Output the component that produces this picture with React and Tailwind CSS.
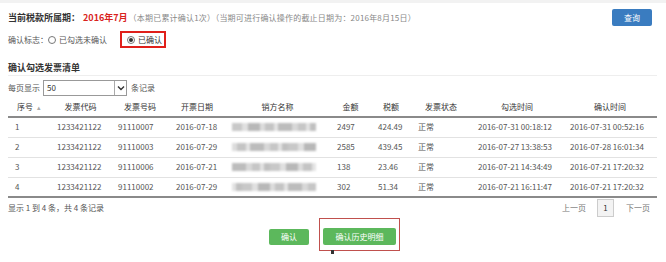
import React from 'react';

const rows = [
  { no: 1, code: '1233421122', num: '91110007', date: '2016-07-18', amount: '2497', tax: '424.49', status: '正常', pick: '2016-07-31 00:18:12', confirm: '2016-07-31 00:52:16' },
  { no: 2, code: '1233421122', num: '91110003', date: '2016-07-29', amount: '2585', tax: '439.45', status: '正常', pick: '2016-07-27 13:38:53', confirm: '2016-07-28 16:01:34' },
  { no: 3, code: '1233421122', num: '91110006', date: '2016-07-21', amount: '138', tax: '23.46', status: '正常', pick: '2016-07-21 14:34:49', confirm: '2016-07-21 17:20:32' },
  { no: 4, code: '1233421122', num: '91110002', date: '2016-07-29', amount: '302', tax: '51.34', status: '正常', pick: '2016-07-21 16:11:47', confirm: '2016-07-21 17:20:32' },
];

const headers = ['序号', '发票代码', '发票号码', '开票日期', '销方名称', '金额', '税额', '发票状态', '勾选时间', '确认时间'];
const widths = [42, 61, 58, 56, 105, 41, 40, 60, 92, 94];

// blurred seller name blocks
function Blurred({ seed }) {
  const segs = [
    [10, '#c8c8c8'], [6, '#e0e0e0'], [12, '#b8b8b8'], [5, '#dcdcdc'], [9, '#c4c4c4'],
    [4, '#e4e4e4'], [14, '#bcbcbc'], [6, '#d8d8d8'], [8, '#c6c6c6'], [4, '#e2e2e2'], [6, '#c0c0c0'],
  ];
  const shifted = segs.slice(seed).concat(segs.slice(0, seed));
  return (
    <div className="flex h-[8px] w-[84px] blur-[1px]">
      {shifted.map(([w, c], i) => (
        <span key={i} className="h-full" style={{ width: w, background: c }} />
      ))}
    </div>
  );
}

function Radio({ checked }) {
  return (
    <span className="inline-flex shrink-0 w-[8px] h-[8px] rounded-full border border-[#777] items-center justify-center bg-white">
      {checked && <span className="w-[4px] h-[4px] rounded-full bg-[#333]" />}
    </span>
  );
}

export default function App() {
  return (
    <div className="w-[666px] h-[262px] bg-white overflow-hidden pl-2 pr-[9px] border-t-[3px] border-[#f2f2f2] text-[#555]" style={{ fontFamily: '"Noto Sans CJK SC", "Noto Sans", sans-serif' }}>
      {/* period row */}
      <div className="mt-[6px] h-[17px] flex items-center justify-between">
        <div className="flex items-center whitespace-nowrap">
          <span className="text-[9px] font-bold text-[#333]">当前税款所属期：</span>
          <span className="text-[9px] font-bold text-[#d9231d] ml-[3px]">2016年7月</span>
          <span className="text-[8px] text-[#888] ml-[1px] tracking-[0.2px]">（本期已累计确认1次）（当期可进行确认操作的截止日期为：2016年8月15日）</span>
        </div>
        <button className="w-[40px] h-[17px] mr-[5px] bg-[#3a7cc0] rounded-[2px] text-white text-[8px] flex items-center justify-center">查询</button>
      </div>

      {/* confirm flag */}
      <div className="mt-[5px] h-[17px] flex items-center text-[8px] text-[#555] whitespace-nowrap">
        <span>确认标志：</span>
        <Radio />
        <span className="ml-[3px]">已勾选未确认</span>
        <div className="ml-[13px] w-[46px] h-[17px] border-2 border-[#e0201b] flex items-center pl-[5px] gap-[3px]">
          <Radio checked />
          <span className="text-[#333]">已确认</span>
        </div>
      </div>

      {/* section title */}
      <div className="mt-[14px] h-[12px] flex items-center text-[9px] font-bold text-[#333]">确认勾选发票清单</div>
      <div className="mt-px h-px bg-[#eeeeee]" />

      {/* page size */}
      <div className="mt-[4px] h-[16px] flex items-center text-[8px]">
        <span className="text-[#555]">每页显示</span>
        <div className="ml-[3px] w-[84px] h-[16px] border border-[#999] flex items-center justify-between bg-white">
          <span className="pl-[3px] text-[#333]">50</span>
          <span className="w-[12px] h-[14px] border-l border-[#aaa] flex items-center justify-center">
            <svg width="8" height="6" viewBox="0 0 8 6"><path d="M1 1.5 L4 4.5 L7 1.5" stroke="#333" strokeWidth="1.4" fill="none" /></svg>
          </span>
        </div>
        <span className="ml-[4px] text-[#555]">条记录</span>
      </div>

      {/* table */}
      <table className="mt-px w-[649px] table-fixed border-collapse text-[8px]">
        <colgroup>
          {widths.map((w, i) => <col key={i} style={{ width: w }} />)}
        </colgroup>
        <thead>
          <tr className="h-[20px] border-b-2 border-[#8a8a8a]">
            {headers.map((h, i) => (
              <th key={h} className="font-normal text-[#333] text-center p-0">
                {h}{i === 0 && <span className="ml-[4px] text-[7px] text-[#aaa]">▴</span>}
              </th>
            ))}
          </tr>
        </thead>
        <tbody>
          {rows.map((r, i) => (
            <tr key={r.no} className={`h-[20px] ${i === rows.length - 1 ? 'border-b-2 border-[#8a8a8a]' : 'border-b border-[#e2e2e2]'}`}>
              <td className="pl-[7px] p-0">{r.no}</td>
              <td className="pl-[7px] p-0">{r.code}</td>
              <td className="pl-[7px] p-0">{r.num}</td>
              <td className="pl-[7px] p-0">{r.date}</td>
              <td className="pl-[7px] p-0"><Blurred seed={i * 3} /></td>
              <td className="pl-[7px] p-0">{r.amount}</td>
              <td className="pl-[7px] p-0">{r.tax}</td>
              <td className="pl-[7px] p-0">{r.status}</td>
              <td className="pl-[7px] p-0 whitespace-nowrap">{r.pick}</td>
              <td className="pl-[7px] p-0 whitespace-nowrap">{r.confirm}</td>
            </tr>
          ))}
        </tbody>
      </table>

      {/* footer */}
      <div className="h-[20px] flex items-center justify-between text-[8px]">
        <span className="text-[#555]">显示 1 到 4 条，共 4 条记录</span>
        <div className="flex items-center mr-[7px]">
          <span className="text-[#777]">上一页</span>
          <span className="ml-[11px] w-[17px] h-[18px] border border-[#ccc] bg-[#f3f3f3] flex items-center justify-center text-[#333]">1</span>
          <span className="ml-[12px] text-[#777]">下一页</span>
        </div>
      </div>

      {/* actions */}
      <div className="flex justify-center items-start gap-[10px] pl-[4px]">
        <button className="mt-[11px] w-[40px] h-[16px] bg-[#5cb85c] rounded-[2px] text-white text-[8px] flex items-center justify-center">确认</button>
        <div className="relative border border-[#c0504d] pt-[9px] pb-[5px] px-[3px]">
          <button className="w-[73px] h-[17px] bg-[#5cb85c] rounded-[2px] text-white text-[8px] flex items-center justify-center">确认历史明细</button>
          <span className="absolute left-[11px] -bottom-[4px] w-[3px] h-[4px] bg-[#333]" />
        </div>
      </div>
    </div>
  );
}
